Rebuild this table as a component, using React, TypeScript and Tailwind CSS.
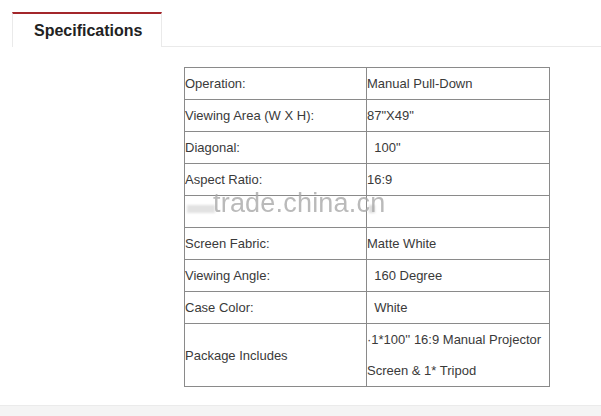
import React from "react";

const rows: [string, string][] = [
  ["Operation:", "Manual Pull-Down"],
  ["Viewing Area (W X H):", "87\"X49\""],
  ["Diagonal:", "\u00a0 100\""],
  ["Aspect Ratio:", "16:9"],
  ["", ""],
  ["Screen Fabric:", "Matte White"],
  ["Viewing Angle:", "\u00a0 160 Degree"],
  ["Case Color:", "\u00a0 White"],
];

export default function App() {
  return (
    <div className="relative w-[601px] h-[416px] bg-white overflow-hidden text-[#3a3a3a]" style={{ fontFamily: '"Liberation Sans", Arial, sans-serif' }}>
      <div className="flex pt-3 pl-3">
        <div className="w-[150px] h-[35px] border-t-2 border-t-[#a3262b] border-l border-r border-[#eaeaea] flex items-center pl-[21px]">
          <span className="font-bold text-[16px] text-[#222] pt-[1px]">Specifications</span>
        </div>
        <div className="flex-1 border-b border-[#eaeaea]" />
      </div>
      <div className="pl-[184px] pt-[20px]">
        <table className="border-collapse text-[13px] leading-[31px]">
          <tbody>
            {rows.map(([a, b], i) => (
              <tr key={i} className="h-[32px]">
                <td className="w-[182px] h-[32px] border border-[#8a8a8a] p-0 align-middle">
                  {i === 4 ? <span className="block h-[31px] pt-[9px]"><span className="block w-[28px] h-[8px] ml-[2px] bg-[#e2e2e2] blur-[1px]" /></span> : a}
                </td>
                <td className="w-[183px] h-[32px] border border-[#8a8a8a] p-0 align-middle">
                  {i === 4 ? <span className="block h-[31px] pt-[9px]"><span className="block w-[6px] h-[8px] ml-[2px] bg-[#dcdcdc] blur-[1px]" /></span> : b}
                </td>
              </tr>
            ))}
            <tr className="h-[63px]">
              <td className="border border-[#8a8a8a] p-0 align-middle">Package Includes</td>
              <td className="border border-[#8a8a8a] p-0 align-middle">
                <div>·1*100'' 16:9 Manual Projector</div>
                <div>Screen &amp; 1* Tripod</div>
              </td>
            </tr>
          </tbody>
        </table>
      </div>
      <div className="absolute left-[213px] top-[183px] text-[27px] text-[#a9a9a9] opacity-80 tracking-[0.2px]">trade.china.cn</div>
      <div className="absolute left-0 right-0 top-[405px] h-[11px] bg-[#f4f4f4] border-t border-[#ebebeb]" />
    </div>
  );
}
